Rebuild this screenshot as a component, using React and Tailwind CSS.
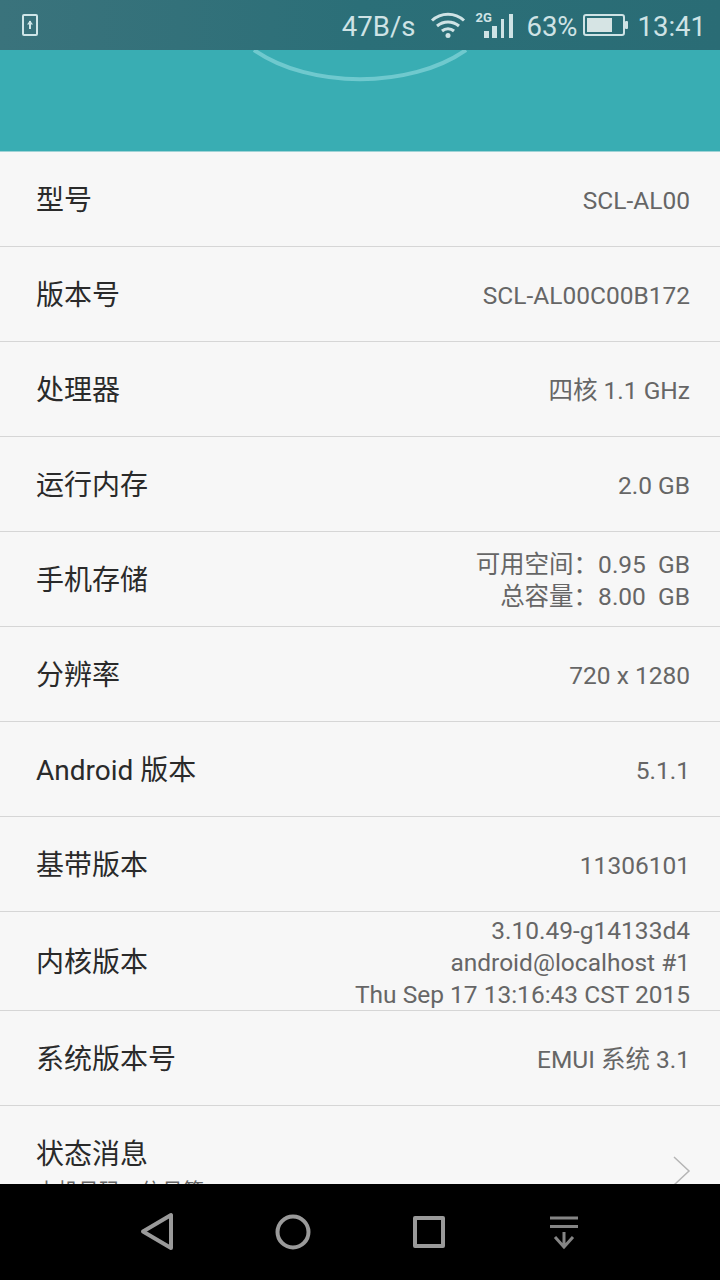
const rows = [
  { label: "型号", value: ["SCL-AL00"] },
  { label: "版本号", value: ["SCL-AL00C00B172"] },
  { label: "处理器", value: ["四核 1.1 GHz"] },
  { label: "运行内存", value: ["2.0 GB"] },
  { label: "手机存储", value: ["可用空间：0.95  GB", "总容量：8.00  GB"] },
  { label: "分辨率", value: ["720 x 1280"] },
  { label: "Android 版本", value: ["5.1.1"] },
  { label: "基带版本", value: ["11306101"] },
  { label: "内核版本", value: ["3.10.49-g14133d4", "android@localhost #1", "Thu Sep 17 13:16:43 CST 2015"], tall: true },
  { label: "系统版本号", value: ["EMUI 系统 3.1"] },
];

function StatusBar() {
  return (
    <div className="flex h-[50px] shrink-0 items-center justify-between bg-gradient-to-r from-[#3a737c] via-[#2b6f78] to-[#2a6c75] pl-[21px] pr-[14px] text-[#cfe3e5]">
      <svg width="18" height="24" viewBox="0 0 18 24" fill="none">
        <rect x="2" y="2" width="14" height="20" rx="1" stroke="#cfe6e8" strokeWidth="2" />
        <path d="M9 8V16" stroke="#cfe6e8" strokeWidth="2" />
        <path d="M6 11.500L9 7.500L12 11.500z" fill="#cfe6e8" />
      </svg>
      <div className="flex items-center text-[27.5px] leading-none">
        <span className="mt-[4px]">47B/s</span>
        <svg className="ml-[15px]" width="36" height="28" viewBox="0 0 36 28" fill="none" stroke="#cfe3e5" strokeWidth="3">
          <path d="M2 9.500C11 1 25 1 34 9.500" />
          <path d="M7 15C13.500 9.500 22.500 9.500 29 15" />
          <path d="M12 20C15.500 17 20.500 17 24 20" />
          <circle cx="18" cy="24.500" r="2.500" fill="#cfe3e5" stroke="none" />
        </svg>
        <div className="relative ml-[9px] h-[28px] w-[40px]">
          <span className="absolute left-0 top-0 text-[13px] font-bold leading-none">2G</span>
          <svg className="absolute left-0 top-0" width="40" height="28" viewBox="0 0 40 28" fill="#cfe3e5">
            <rect x="9" y="20" width="5" height="7" />
            <rect x="17" y="15" width="5" height="12" />
            <rect x="26" y="8" width="3" height="19" />
            <rect x="34" y="3" width="4" height="24" />
          </svg>
        </div>
        <span className="ml-[11px] mt-[4px]">63%</span>
        <svg className="ml-[5px]" width="46" height="24" viewBox="0 0 46 24" fill="none">
          <rect x="1" y="2" width="40" height="20" rx="2" stroke="#cfe3e5" strokeWidth="2" />
          <rect x="4" y="5" width="25" height="14" fill="#d6e4e4" />
          <rect x="42" y="8" width="3" height="8" rx="1" fill="#cfe3e5" />
        </svg>
        <span className="ml-[9px] mt-[4px]">13:41</span>
      </div>
    </div>
  );
}

function Header() {
  return (
    <div className="relative h-[102px] shrink-0 overflow-hidden border-b border-[#9fd3d6] bg-[#39adb3]">
      {/* arc of the phone dial, cut off by the status bar */}
      <svg className="absolute left-[240px] top-0" width="240" height="34" viewBox="0 0 240 34" fill="none">
        <path d="M14 0C70 39 170 39 226 0" stroke="#6fc9ce" strokeWidth="4" />
      </svg>
    </div>
  );
}

function InfoRow({ label, value, tall }) {
  return (
    <div className={`flex shrink-0 items-center justify-between border-b border-[#d6d6d6] pl-9 pr-[30px] pt-1 ${tall ? "h-[99px]" : "h-[95px]"}`}>
      <span className="text-[28px] leading-none text-[#2a2a2a]">{label}</span>
      <div className="whitespace-pre text-right text-[24.5px] leading-[32px] text-[#666666]">
        {value.map((line) => (
          <div key={line}>{line}</div>
        ))}
      </div>
    </div>
  );
}

function NavBar() {
  return (
    <div className="flex h-[96px] shrink-0 items-center bg-black pl-[138px]">
      <svg width="38" height="40" viewBox="0 0 38 40" fill="none" stroke="#9a9a9a" strokeWidth="4" strokeLinejoin="round">
        <path d="M5 19.500L33 3V36z" />
      </svg>
      <svg className="ml-[99px]" width="38" height="38" viewBox="0 0 38 38" fill="none" stroke="#9a9a9a" strokeWidth="4">
        <circle cx="18" cy="19" r="15.500" />
      </svg>
      <svg className="ml-[99px]" width="36" height="36" viewBox="0 0 36 36" fill="none" stroke="#9a9a9a" strokeWidth="4" strokeLinejoin="round">
        <rect x="3" y="4" width="28" height="28" />
      </svg>
      <svg className="ml-[99px]" width="36" height="36" viewBox="0 0 36 36" fill="none" stroke="#858585" strokeWidth="3">
        <path d="M3 4H31M3 12.500H31M17 18V33M8 23L17 33L26 23" />
      </svg>
    </div>
  );
}

export default function App() {
  return (
    <div className="flex h-[1280px] w-[720px] flex-col overflow-hidden bg-[#f7f7f7] font-['Roboto','Noto_Sans_CJK_SC',sans-serif]">
      <StatusBar />
      <Header />
      <div className="flex min-h-0 flex-1 flex-col overflow-hidden">
        {rows.map((row) => (
          <InfoRow key={row.label} {...row} />
        ))}
        <div className="relative flex h-[95px] shrink-0 flex-col pl-9 pt-[35px]">
          <span className="text-[28px] leading-none text-[#2a2a2a]">状态消息</span>
          <span className="mt-[12px] text-[21px] leading-none text-[#666666]">本机号码、信号等</span>
          <svg className="absolute right-[28px] top-[49px]" width="20" height="32" viewBox="0 0 20 32" fill="none" stroke="#b5b5b5" strokeWidth="1.500">
            <path d="M2 2L17 16L2 30" />
          </svg>
        </div>
      </div>
      <NavBar />
    </div>
  );
}
